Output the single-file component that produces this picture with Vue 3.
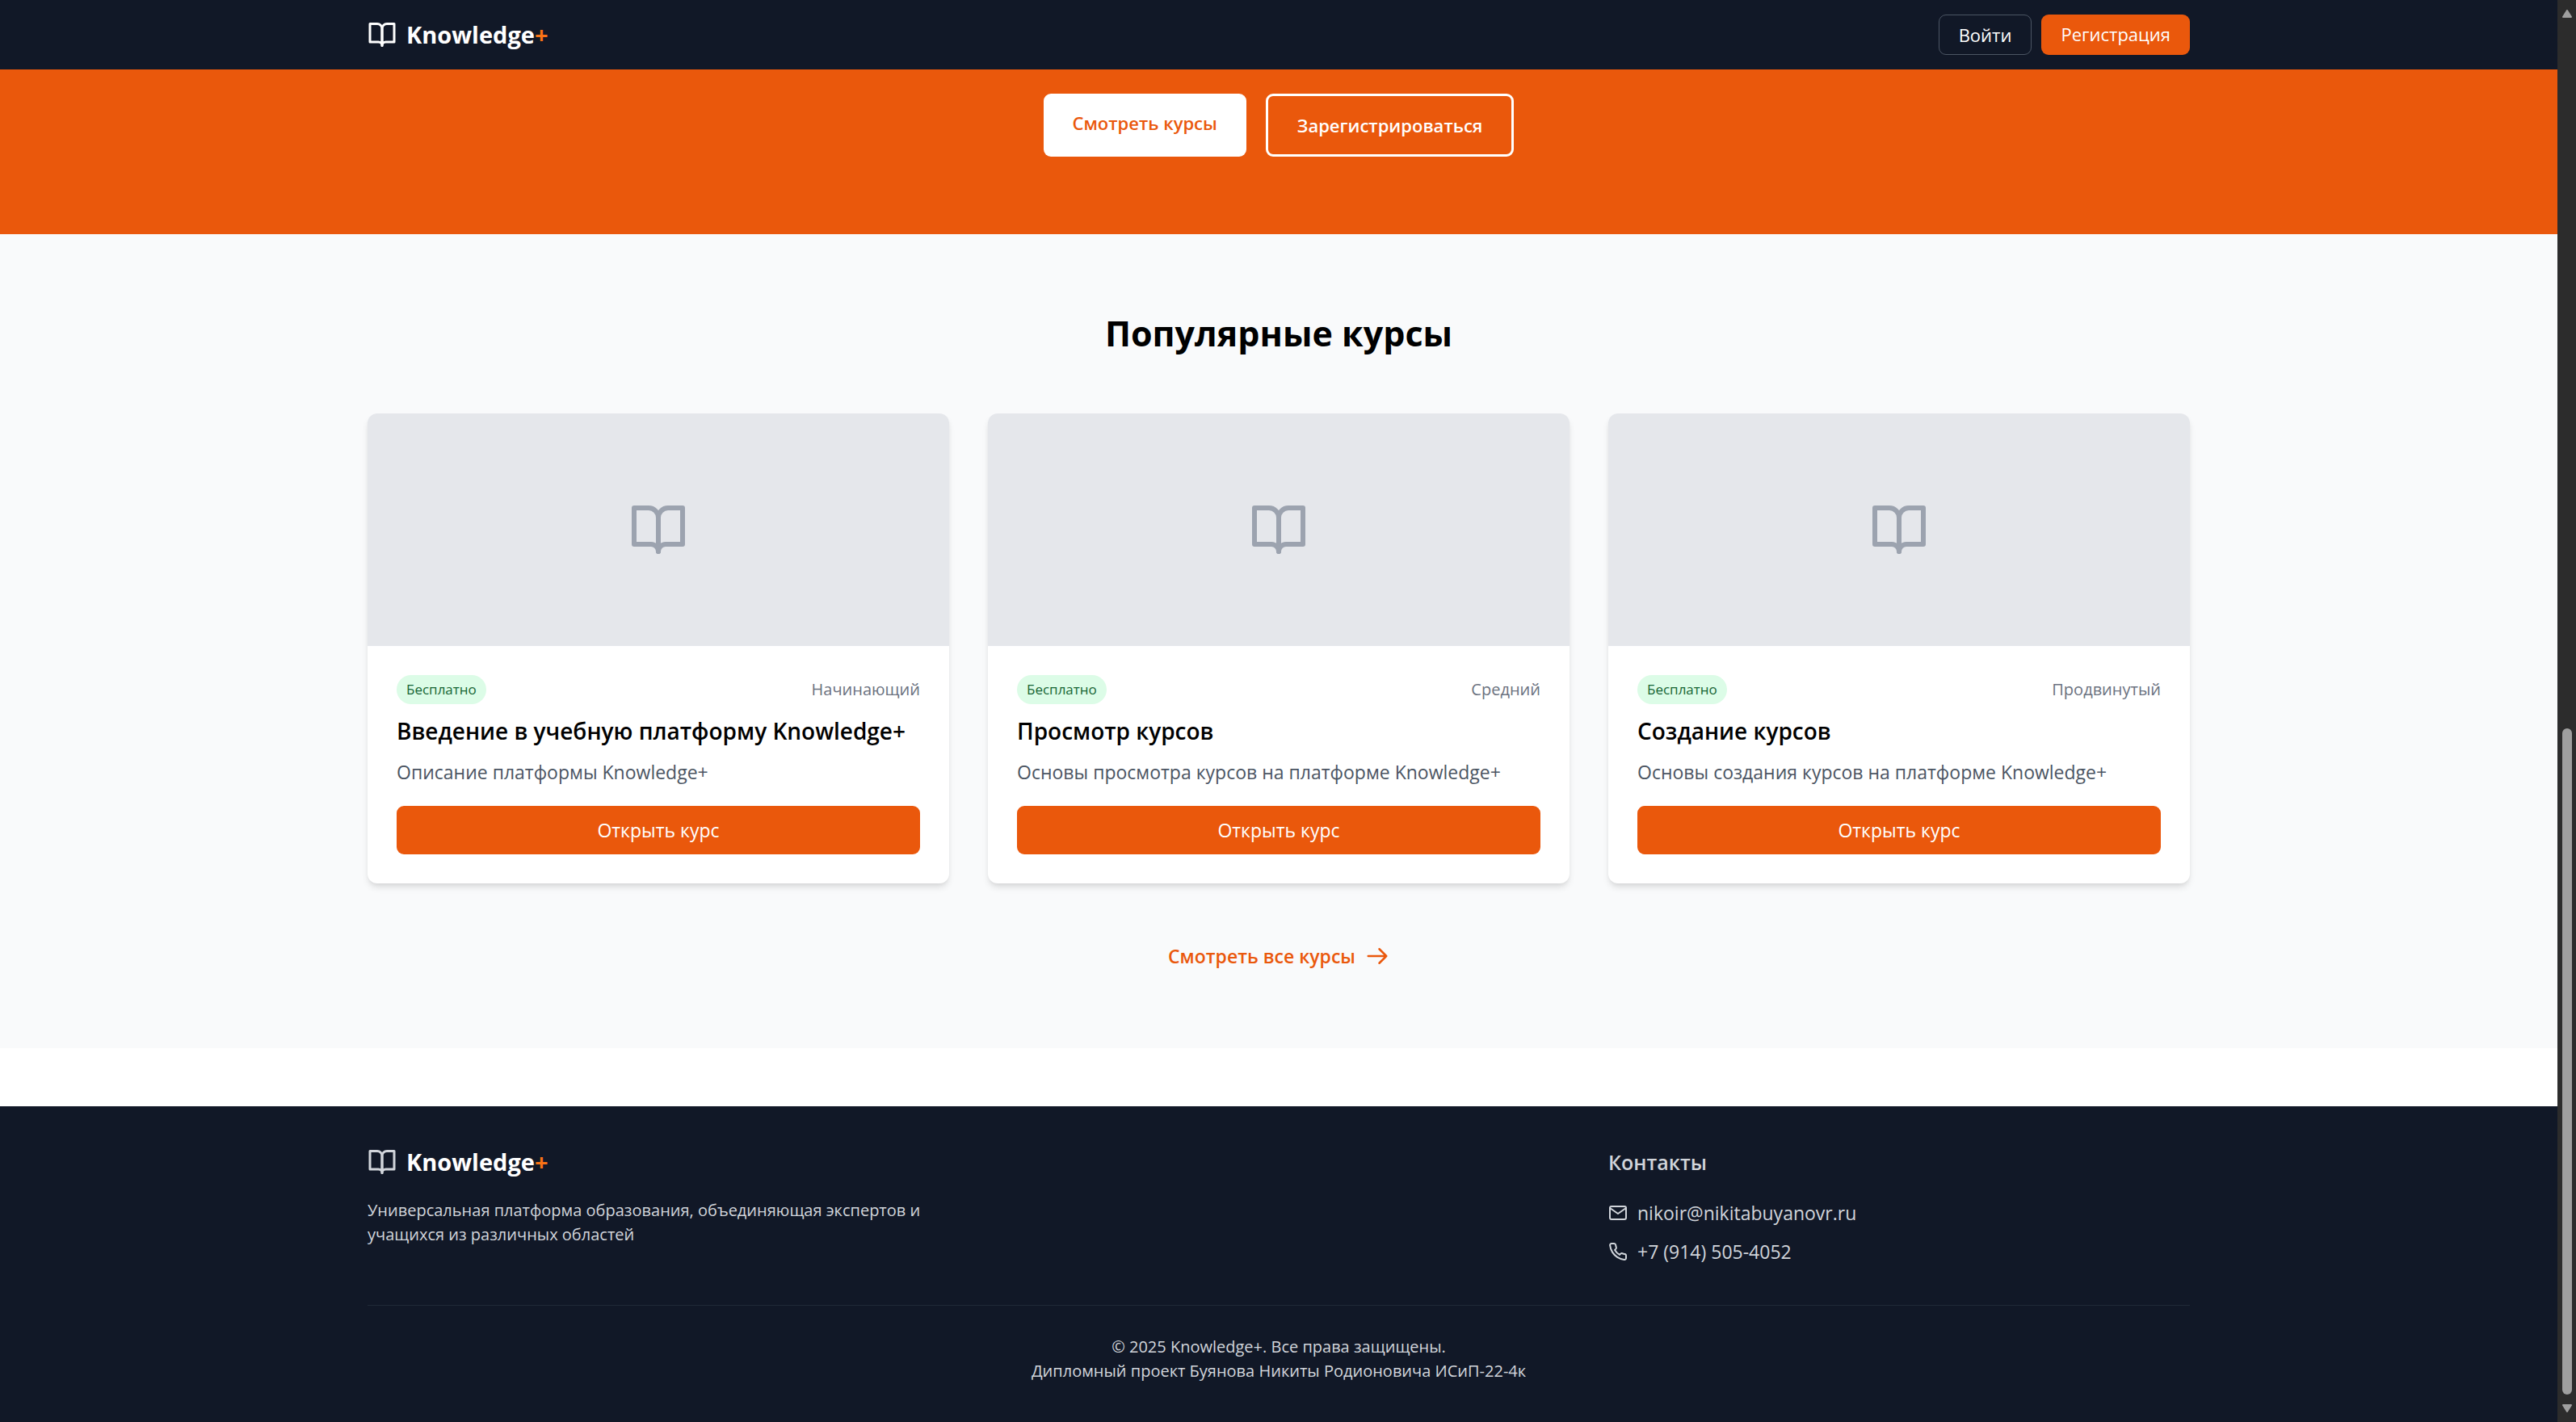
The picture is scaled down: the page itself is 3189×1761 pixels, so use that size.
<script setup>
const courses = [
  { title: 'Введение в учебную платформу Knowledge+', level: 'Начинающий', text: 'Описание платформы Knowledge+' },
  { title: 'Просмотр курсов', level: 'Средний', text: 'Основы просмотра курсов на платформе Knowledge+' },
  { title: 'Создание курсов', level: 'Продвинутый', text: 'Основы создания курсов на платформе Knowledge+' },
]
</script>

<template>
  <div class="window">
    <div class="page">
      <header class="header">
        <div class="container header-row">
          <a class="brand" href="#">
            <svg class="brand-icon" viewBox="0 0 24 24" aria-hidden="true">
              <path d="M2 3h6a4 4 0 0 1 4 4v14a3 3 0 0 0-3-3H2z" />
              <path d="M22 3h-6a4 4 0 0 0-4 4v14a3 3 0 0 1 3-3h7z" />
            </svg>
            <span class="brand-name">Knowledge<span class="plus">+</span></span>
          </a>
          <nav class="auth">
            <a class="auth-link outline" href="#">Войти</a>
            <a class="auth-link filled" href="#">Регистрация</a>
          </nav>
        </div>
      </header>

      <main>
        <section class="hero">
          <a class="hero-link light" href="#">Смотреть курсы</a>
          <a class="hero-link bordered" href="#">Зарегистрироваться</a>
        </section>

        <section class="popular">
          <div class="container">
            <h2 class="popular-title">Популярные курсы</h2>
            <div class="cards">
              <article v-for="course in courses" :key="course.title" class="card">
                <div class="cover">
                  <svg class="cover-icon" viewBox="0 0 24 24" aria-hidden="true">
                    <path d="M2 3h6a4 4 0 0 1 4 4v14a3 3 0 0 0-3-3H2z" />
                    <path d="M22 3h-6a4 4 0 0 0-4 4v14a3 3 0 0 1 3-3h7z" />
                  </svg>
                </div>
                <div class="card-body">
                  <div class="meta">
                    <span class="badge">Бесплатно</span>
                    <span class="level">{{ course.level }}</span>
                  </div>
                  <h3 class="card-title">{{ course.title }}</h3>
                  <p class="card-text">{{ course.text }}</p>
                  <a class="card-link" href="#">Открыть курс</a>
                </div>
              </article>
            </div>
            <div class="more">
              <a class="more-link" href="#">
                Смотреть все курсы
                <svg class="more-icon" viewBox="0 0 24 24" aria-hidden="true">
                  <path d="M14 5l7 7m0 0l-7 7m7-7H3" />
                </svg>
              </a>
            </div>
          </div>
        </section>
      </main>

      <footer class="footer">
        <div class="container">
          <div class="footer-grid">
            <div class="about">
              <a class="brand" href="#">
                <svg class="brand-icon muted" viewBox="0 0 24 24" aria-hidden="true">
                  <path d="M2 3h6a4 4 0 0 1 4 4v14a3 3 0 0 0-3-3H2z" />
                  <path d="M22 3h-6a4 4 0 0 0-4 4v14a3 3 0 0 1 3-3h7z" />
                </svg>
                <span class="brand-name">Knowledge<span class="plus">+</span></span>
              </a>
              <p class="about-text">Универсальная платформа образования, объединяющая экспертов и учащихся из различных областей</p>
            </div>
            <div class="contacts">
              <h3 class="contacts-title">Контакты</h3>
              <ul class="contact-list">
                <li class="contact">
                  <svg class="contact-icon" viewBox="0 0 24 24" aria-hidden="true">
                    <path d="M4 4h16c1.1 0 2 .9 2 2v12c0 1.1-.9 2-2 2H4c-1.1 0-2-.9-2-2V6c0-1.1.9-2 2-2z" />
                    <path d="M22 6l-10 7L2 6" />
                  </svg>
                  <a class="contact-link" href="mailto:nikoir@nikitabuyanovr.ru">nikoir@nikitabuyanovr.ru</a>
                </li>
                <li class="contact">
                  <svg class="contact-icon" viewBox="0 0 24 24" aria-hidden="true">
                    <path d="M22 16.92v3a2 2 0 0 1-2.18 2 19.79 19.79 0 0 1-8.63-3.07 19.5 19.5 0 0 1-6-6 19.79 19.79 0 0 1-3.07-8.67A2 2 0 0 1 4.11 2h3a2 2 0 0 1 2 1.72 12.84 12.84 0 0 0 .7 2.81 2 2 0 0 1-.45 2.11L8.09 9.91a16 16 0 0 0 6 6l1.27-1.27a2 2 0 0 1 2.11-.45 12.84 12.84 0 0 0 2.81.7A2 2 0 0 1 22 16.92z" />
                  </svg>
                  <a class="contact-link" href="tel:+79145054052">+7 (914) 505-4052</a>
                </li>
              </ul>
            </div>
          </div>
          <div class="legal">
            <p>© 2025 Knowledge+. Все права защищены.</p>
            <p>Дипломный проект Буянова Никиты Родионовича ИСиП-22-4к</p>
          </div>
        </div>
      </footer>
    </div>

    <div class="scrollbar" aria-hidden="true">
      <svg class="scroll-arrow" viewBox="0 0 12 10"><path d="M6 1l5 8H1z" /></svg>
      <div class="thumb"></div>
      <svg class="scroll-arrow" viewBox="0 0 12 10"><path d="M6 9l5-8H1z" /></svg>
    </div>
  </div>
</template>

<style>
body {
  margin: 0;
  background: #fff;
}
</style>

<style scoped>
.window {
  display: flex;
  min-height: 100vh;
  font-family: "Open Sans", "Noto Sans", sans-serif;
  font-size: 23px;
  line-height: 36px;
  color: #000;
}

.window * {
  box-sizing: border-box;
}

h2,
h3,
p,
ul {
  margin: 0;
  padding: 0;
}

a {
  color: inherit;
  text-decoration: none;
}

svg {
  flex: none;
  fill: none;
  stroke: currentColor;
  stroke-width: 2;
  stroke-linecap: round;
  stroke-linejoin: round;
}

.page {
  flex: 1;
  min-width: 0;
  display: flex;
  flex-direction: column;
}

.container {
  width: 100%;
  max-width: 2304px;
  margin: 0 auto;
  padding: 0 24px;
}

.header {
  padding: 18px 0;
  background: #111827;
  color: #fff;
}

.header-row {
  display: flex;
  align-items: center;
  justify-content: space-between;
}

.brand {
  display: flex;
  align-items: center;
  gap: 12px;
}

.brand-icon {
  width: 36px;
  height: 36px;
}

.brand-icon.muted {
  color: #d1d5db;
}

.brand-name {
  font-size: 29px;
  font-weight: 700;
  line-height: 42px;
  color: #fff;
}

.plus {
  color: #f97316;
}

.auth {
  display: flex;
  gap: 12px;
}

.auth-link {
  padding: 6px 24px;
  border-radius: 9px;
  font-size: 22px;
}

.outline {
  border: 1px solid #4b5563;
}

.filled {
  background: #ea580c;
}

.hero {
  display: flex;
  justify-content: center;
  gap: 24px;
  padding: 30px 24px 96px;
  background: #ea580c;
}

.hero-link {
  padding: 18px 36px;
  border-radius: 9px;
  font-size: 22px;
  font-weight: 600;
}

.light {
  background: #fff;
  color: #ea580c;
}

.bordered {
  border: 3px solid #fff;
  color: #fff;
}

.popular {
  padding: 96px 0;
  background: #f9fafb;
}

.popular-title {
  margin-bottom: 72px;
  font-size: 43px;
  font-weight: 700;
  line-height: 54px;
  text-align: center;
}

.cards {
  display: grid;
  grid-template-columns: repeat(3, 1fr);
  gap: 48px;
}

.card {
  overflow: hidden;
  border-radius: 12px;
  background: #fff;
  box-shadow: 0 6px 9px -1px rgb(0 0 0 / 0.1), 0 3px 6px -3px rgb(0 0 0 / 0.1);
}

.cover {
  display: flex;
  align-items: center;
  justify-content: center;
  height: 288px;
  background: #e5e7eb;
}

.cover-icon {
  width: 72px;
  height: 72px;
  color: #9ca3af;
}

.card-body {
  padding: 36px;
}

.meta {
  display: flex;
  align-items: center;
  justify-content: space-between;
  margin-bottom: 12px;
}

.badge {
  padding: 6px 12px;
  border-radius: 18px;
  background: #dcfce7;
  color: #166534;
  font-size: 17px;
  line-height: 24px;
}

.level {
  color: #6b7280;
  font-size: 20px;
  line-height: 30px;
}

.card-title {
  margin-bottom: 12px;
  font-size: 28px;
  font-weight: 600;
  line-height: 42px;
}

.card-text {
  margin-bottom: 24px;
  color: #4b5563;
}

.card-link {
  display: block;
  padding: 12px;
  border-radius: 9px;
  background: #ea580c;
  color: #fff;
  text-align: center;
}

.more {
  display: flex;
  justify-content: center;
  margin-top: 72px;
}

.more-link {
  display: flex;
  align-items: center;
  gap: 12px;
  color: #ea580c;
  font-weight: 600;
}

.more-icon {
  width: 30px;
  height: 30px;
}

.footer {
  margin-top: 72px;
  padding: 48px 0;
  background: #111827;
  color: #d1d5db;
}

.footer-grid {
  display: grid;
  grid-template-columns: repeat(3, 1fr);
  gap: 48px;
}

.about {
  grid-column: span 2;
}

.about-text {
  max-width: 720px;
  margin-top: 24px;
  font-size: 20px;
  line-height: 30px;
}

.contacts-title {
  margin-bottom: 24px;
  font-size: 25px;
  font-weight: 600;
  line-height: 42px;
}

.contact-list {
  display: flex;
  flex-direction: column;
  gap: 12px;
  list-style: none;
}

.contact {
  display: flex;
  align-items: center;
  gap: 12px;
}

.contact-icon {
  width: 24px;
  height: 24px;
}

.legal {
  margin-top: 48px;
  padding-top: 36px;
  border-top: 1px solid #1f2937;
  font-size: 20px;
  line-height: 30px;
  text-align: center;
}

.scrollbar {
  display: flex;
  flex-direction: column;
  align-items: center;
  gap: 12px;
  width: 23px;
  padding: 12px 0;
  background: #2c2c2c;
}

.scroll-arrow {
  width: 12px;
  height: 10px;
  fill: #9f9f9f;
  stroke: #9f9f9f;
}

.thumb {
  width: 12px;
  height: 47.5%;
  margin-top: auto;
  border-radius: 6px;
  background: #9f9f9f;
}
</style>
